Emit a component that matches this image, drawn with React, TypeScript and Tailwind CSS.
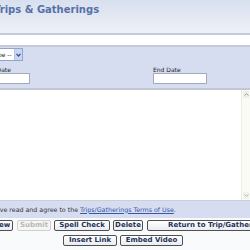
import React from "react";

function Btn({
  className,
  children,
  disabled,
}: {
  className: string;
  children: React.ReactNode;
  disabled?: boolean;
}) {
  return (
    <div
      className={
        "h-[11px] shrink-0 border rounded-[2px] flex items-center text-[7px] font-bold leading-none whitespace-nowrap " +
        (disabled
          ? "border-[#cfcfcf] text-[#b8b8b8] bg-[#f6f6f4] "
          : "border-[#505050] text-[#1e3358] bg-linear-to-b from-white to-[#e9ecf1] ") +
        className
      }
    >
      {children}
    </div>
  );
}

export default function App() {
  return (
    <div className="w-[250px] h-[250px] overflow-hidden bg-[#f9fafc] font-['DejaVu_Sans',sans-serif] text-[#2b2b2b]">
      {/* header */}
      <div className="h-[33px] bg-linear-to-b from-[#d8dfee] to-[#eef1f8] pt-[4px]">
        <div className="-ml-[6px] text-[10px] leading-[12px] font-bold text-[#5571a6] whitespace-nowrap">
          Trips &amp; Gatherings
        </div>
      </div>
      <div className="h-[2px] bg-[#c4cad9]" />
      <div className="h-[10px] bg-white" />
      <div className="h-[2px] bg-[#c4cad9]" />

      {/* filter panel */}
      <div className="h-[41px] bg-[#d7ddf0] pt-[1px]">
        <div className="-ml-[38px] w-[61px] h-[13px] flex items-stretch border border-[#8fa6c6] bg-white">
          <span className="flex-1 pl-[2px] text-[6px] leading-[11px] whitespace-nowrap overflow-hidden text-[#222]">
            -- Select Type --
          </span>
          <span className="w-[8px] bg-[#c9d5f1] border-l border-[#b5c4e6] flex items-center justify-center">
            <svg width="5" height="4" viewBox="0 0 5 4">
              <path d="M0.5 0.8 L2.5 3 L4.5 0.8" fill="none" stroke="#2f4d8e" strokeWidth="1.2" />
            </svg>
          </span>
        </div>
        <div className="mt-[5px] flex">
          <div className="-ml-[20px] w-[173px] shrink-0">
            <div className="text-[6px] leading-[7px] whitespace-nowrap text-[#222]">Start Date</div>
            <div className="w-[50px] h-[11px] bg-white border border-[#a3abb8]" />
          </div>
          <div className="shrink-0">
            <div className="text-[6px] leading-[7px] whitespace-nowrap text-[#222]">End Date</div>
            <div className="w-[54px] h-[11px] bg-white border border-[#a3abb8]" />
          </div>
        </div>
      </div>
      <div className="h-[2px] bg-[#c2c8d3]" />

      {/* textarea */}
      <div className="h-[110px] bg-white flex">
        <div className="flex-1" />
        <div className="w-[9px] bg-[#fbfbf6] border-l border-[#ecece4] flex flex-col justify-between py-[1px]">
          <div className="h-[7px] mx-[1px] bg-[#efefe9] flex items-center justify-center">
            <svg width="5" height="3" viewBox="0 0 5 3">
              <path d="M0.5 2.6 L2.5 0.6 L4.5 2.6" fill="none" stroke="#a0a0a0" strokeWidth="1" />
            </svg>
          </div>
          <div className="h-[7px] mx-[1px] bg-[#f3f3ee] flex items-center justify-center">
            <svg width="5" height="3" viewBox="0 0 5 3">
              <path d="M0.5 0.4 L2.5 2.4 L4.5 0.4" fill="none" stroke="#b0b0b0" strokeWidth="1" />
            </svg>
          </div>
        </div>
      </div>
      <div className="h-[1px] bg-[#c9cfda]" />

      {/* agreement */}
      <div className="h-[17px] bg-[#d7ddf0] flex items-center">
        <div className="-ml-[12px] text-[6.3px] leading-[8px] whitespace-nowrap text-[#333]">
          I have read and agree to the{" "}
          <span className="underline text-[#3656a6]">Trips/Gatherings Terms of Use</span>.
        </div>
      </div>

      {/* buttons */}
      <div className="mt-[2px] flex">
        <Btn className="-ml-[24px] w-[37px] justify-center">Preview</Btn>
        <Btn disabled className="ml-[4px] w-[34px] justify-center">
          Submit
        </Btn>
        <Btn className="ml-[3px] w-[56px] justify-center">Spell Check</Btn>
        <Btn className="ml-[3px] w-[30px] justify-center">Delete</Btn>
        <Btn className="ml-[4px] w-[150px] justify-start pl-[20px]">Return to Trip/Gathering List</Btn>
      </div>
      <div className="mt-[4px] flex">
        <Btn className="ml-[63px] w-[54px] justify-center">Insert Link</Btn>
        <Btn className="ml-[3px] w-[63px] justify-center">Embed Video</Btn>
      </div>
    </div>
  );
}
